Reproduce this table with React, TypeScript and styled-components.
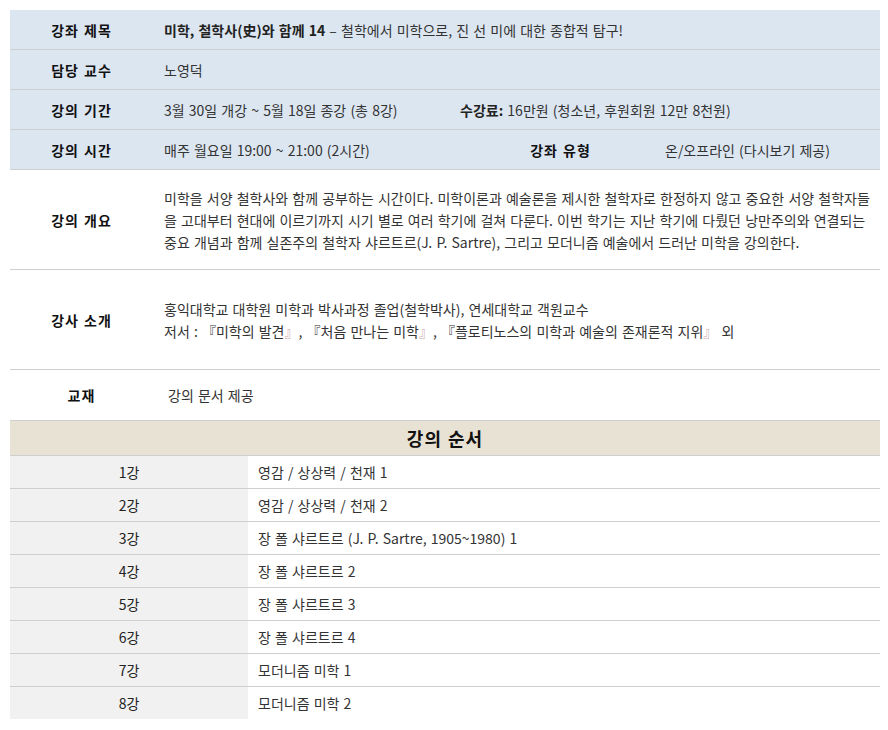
import styled, { createGlobalStyle } from 'styled-components';

const GlobalStyle = createGlobalStyle`
  body {
    margin: 0;
    background: #fff;
    font-family: "Noto Sans CJK KR", "Noto Sans", sans-serif;
    font-size: 14px;
    color: #333;
  }
`

const Page = styled.div`
  width: 870px;
  padding: 10px;
`

const InfoTable = styled.div`
  display: flex;
  flex-direction: column;
`

const InfoRow = styled.div<{ $cols?: string; $h: number; $tint?: boolean; $last?: boolean }>`
  display: grid;
  grid-template-columns: ${p => p.$cols || '143px 1fr'};
  height: ${p => p.$h}px;
  box-sizing: border-box;
  background: ${p => (p.$tint ? '#dce6f1' : '#fff')};
  border-bottom: ${p => (p.$last ? 'none' : '1px solid #cfcfcf')};
`

const Label = styled.div`
  display: flex;
  align-items: center;
  justify-content: center;
  font-weight: bold;
  color: #111;
  letter-spacing: 1px;
  word-spacing: 1px;
`

const Value = styled.div<{ $pl?: number }>`
  display: flex;
  flex-direction: column;
  justify-content: center;
  padding-left: ${p => p.$pl ?? 11}px;
  word-spacing: 1px;
  white-space: nowrap;
  line-height: 22px;

  strong {
    color: #222;
  }
`

const Schedule = styled.div`
  display: flex;
  flex-direction: column;
`

const ScheduleHead = styled.div`
  height: 36px;
  box-sizing: border-box;
  border-top: 1px solid #cfcfcf;
  border-bottom: 1px solid #cfcfcf;
  background: #e8e2d4;
  display: flex;
  align-items: center;
  justify-content: center;
  font-size: 18px;
  font-weight: bold;
  color: #111;
  letter-spacing: 1px;
  word-spacing: 1px;
`

const ScheduleRow = styled.div<{ $last?: boolean }>`
  display: grid;
  grid-template-columns: 238px 1fr;
  height: ${p => (p.$last ? 32 : 33)}px;
  box-sizing: border-box;
  border-bottom: ${p => (p.$last ? 'none' : '1px solid #cfcfcf')};
`

const Num = styled.div`
  background: #f1f1f1;
  display: flex;
  align-items: center;
  justify-content: center;
  color: #222;
`

const Topic = styled.div`
  display: flex;
  align-items: center;
  padding-left: 10px;
  word-spacing: 1px;
`

const Bracket = styled.span`
  color: #c9a9a9;
`

const lessons = [
  '영감 / 상상력 / 천재 1',
  '영감 / 상상력 / 천재 2',
  '장 폴 샤르트르 (J. P. Sartre, 1905~1980) 1',
  '장 폴 샤르트르 2',
  '장 폴 샤르트르 3',
  '장 폴 샤르트르 4',
  '모더니즘 미학 1',
  '모더니즘 미학 2',
];

const App = () => {
  return (
    <Page>
      <GlobalStyle />
      <InfoTable>
        <InfoRow $h={40} $tint>
          <Label>강좌 제목</Label>
          <Value>
            <span><strong>미학, 철학사(史)와 함께 14</strong> – 철학에서 미학으로, 진 선 미에 대한 종합적 탐구!</span>
          </Value>
        </InfoRow>
        <InfoRow $h={40} $tint>
          <Label>담당 교수</Label>
          <Value>노영덕</Value>
        </InfoRow>
        <InfoRow $h={40} $tint $cols="143px 296px 1fr">
          <Label>강의 기간</Label>
          <Value>3월 30일 개강 ~ 5월 18일 종강 (총 8강)</Value>
          <Value>
            <span><strong>수강료:</strong> 16만원 (청소년, 후원회원 12만 8천원)</span>
          </Value>
        </InfoRow>
        <InfoRow $h={40} $tint $cols="143px 314px 187px 1fr">
          <Label>강의 시간</Label>
          <Value>매주 월요일 19:00 ~ 21:00 (2시간)</Value>
          <Label>강좌 유형</Label>
          <Value>온/오프라인 (다시보기 제공)</Value>
        </InfoRow>
        <InfoRow $h={100}>
          <Label>강의 개요</Label>
          <Value>
            <span>미학을 서양 철학사와 함께 공부하는 시간이다. 미학이론과 예술론을 제시한 철학자로 한정하지 않고 중요한 서양 철학자들</span>
            <span>을 고대부터 현대에 이르기까지 시기 별로 여러 학기에 걸쳐 다룬다. 이번 학기는 지난 학기에 다뤘던 낭만주의와 연결되는</span>
            <span>중요 개념과 함께 실존주의 철학자 샤르트르(J. P. Sartre), 그리고 모더니즘 예술에서 드러난 미학을 강의한다.</span>
          </Value>
        </InfoRow>
        <InfoRow $h={100}>
          <Label>강사 소개</Label>
          <Value>
            <span>홍익대학교 대학원 미학과 박사과정 졸업(철학박사), 연세대학교 객원교수</span>
            <span>
              저서 : 『미학의 발견<Bracket>』</Bracket>, 『처음 만나는 미학<Bracket>』</Bracket>, 『플로티노스의 미학과 예술의 존재론적 지위<Bracket>』</Bracket> 외
            </span>
          </Value>
        </InfoRow>
        <InfoRow $h={50} $last>
          <Label>교재</Label>
          <Value $pl={15}>강의 문서 제공</Value>
        </InfoRow>
      </InfoTable>
      <Schedule>
        <ScheduleHead>강의 순서</ScheduleHead>
        {lessons.map((topic, i) => (
          <ScheduleRow key={i} $last={i === lessons.length - 1}>
            <Num>{i + 1}강</Num>
            <Topic>{topic}</Topic>
          </ScheduleRow>
        ))}
      </Schedule>
    </Page>
  );
}

export default App;
